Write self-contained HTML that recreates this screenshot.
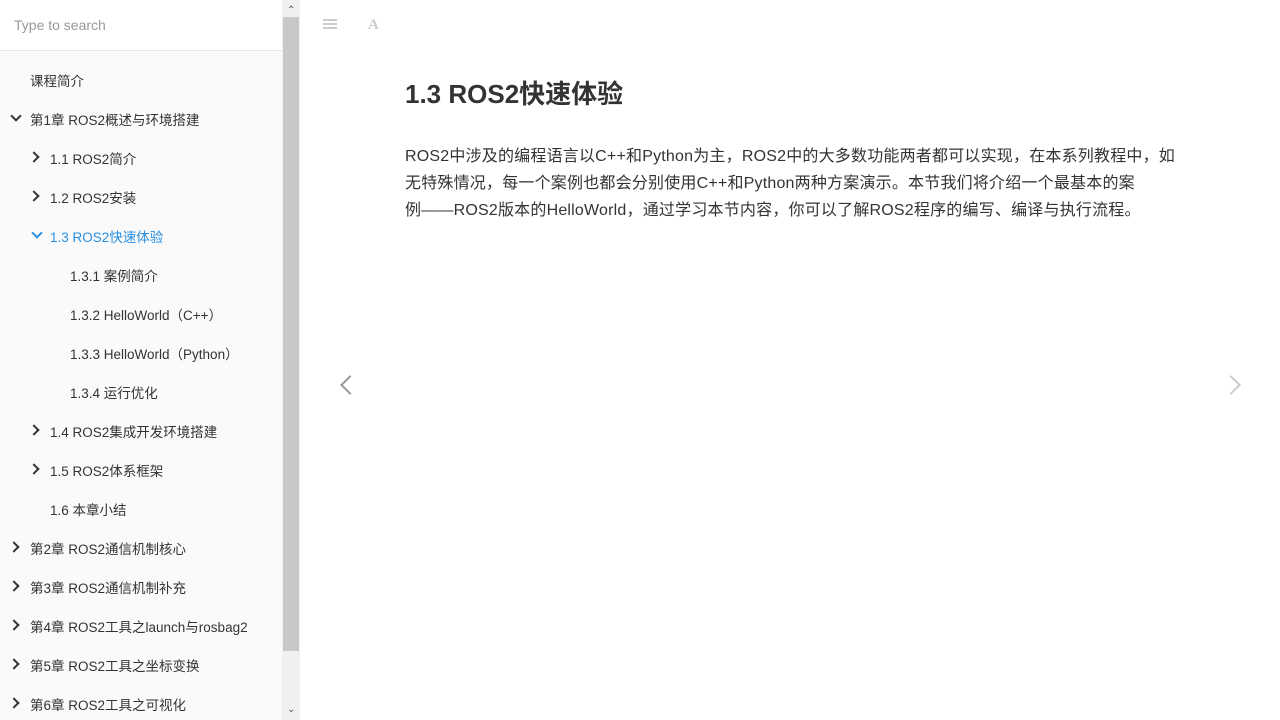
<!DOCTYPE html>
<html><head><meta charset="utf-8"><style>
*{margin:0;padding:0;box-sizing:border-box}
body{width:1280px;height:720px;overflow:hidden;background:#fff;font-family:"Liberation Sans","Noto Sans CJK SC",sans-serif;position:relative}
#side{position:absolute;left:0;top:0;width:282px;height:720px;background:#fafafa}
#search{height:51px;background:#fff;border-bottom:1px solid #e6e6e6;padding:17px 14px;font-size:14px;color:#999}
.it{position:absolute;font-size:13.5px;color:#333;white-space:nowrap}
.it.a{color:#2a8fe0}
.chev{position:absolute;width:8px;height:8px;border-right:2.6px solid #333;border-bottom:2.6px solid #333}
.r{transform:rotate(-45deg)}.d{transform:rotate(45deg)}
#sb{position:absolute;left:282px;top:0;width:18px;height:720px;background:#f0f0f0}
#thumb{position:absolute;left:283px;top:17px;width:16px;height:634px;background:#c8c8c8}
h1{position:absolute;left:405px;top:74px;font-size:26px;font-weight:bold;color:#333}
p{position:absolute;left:405px;top:143px;width:800px;font-size:16px;line-height:27px;color:#333;white-space:nowrap;letter-spacing:0.2px}
.nav{position:absolute;width:14px;height:14px;border-left:2.5px solid #999;border-bottom:2.5px solid #999}
</style></head><body>
<div id="side"><div id="search">Type to search</div></div>
<div class="it" style="left:30px;top:70px">课程简介</div>
<div class="chev d" style="left:12px;top:112px"></div><div class="it" style="left:30px;top:109px">第1章 ROS2概述与环境搭建</div>
<div class="chev r" style="left:30px;top:153px"></div><div class="it" style="left:50px;top:148px">1.1 ROS2简介</div>
<div class="chev r" style="left:30px;top:192px"></div><div class="it" style="left:50px;top:187px">1.2 ROS2安装</div>
<div class="chev d" style="left:33px;top:229px;border-color:#2a8fe0"></div><div class="it a" style="left:50px;top:226px">1.3 ROS2快速体验</div>
<div class="it" style="left:70px;top:265px">1.3.1 案例简介</div>
<div class="it" style="left:70px;top:304px">1.3.2 HelloWorld（C++）</div>
<div class="it" style="left:70px;top:343px">1.3.3 HelloWorld（Python）</div>
<div class="it" style="left:70px;top:382px">1.3.4 运行优化</div>
<div class="chev r" style="left:30px;top:426px"></div><div class="it" style="left:50px;top:421px">1.4 ROS2集成开发环境搭建</div>
<div class="chev r" style="left:30px;top:465px"></div><div class="it" style="left:50px;top:460px">1.5 ROS2体系框架</div>
<div class="it" style="left:50px;top:499px">1.6 本章小结</div>
<div class="chev r" style="left:10px;top:543px"></div><div class="it" style="left:30px;top:538px">第2章 ROS2通信机制核心</div>
<div class="chev r" style="left:10px;top:582px"></div><div class="it" style="left:30px;top:577px">第3章 ROS2通信机制补充</div>
<div class="chev r" style="left:10px;top:621px"></div><div class="it" style="left:30px;top:616px">第4章 ROS2工具之launch与rosbag2</div>
<div class="chev r" style="left:10px;top:660px"></div><div class="it" style="left:30px;top:655px">第5章 ROS2工具之坐标变换</div>
<div class="chev r" style="left:10px;top:699px"></div><div class="it" style="left:30px;top:694px">第6章 ROS2工具之可视化</div>
<div id="sb"></div><div id="thumb"></div>
<div style="position:absolute;left:287px;top:5px;font-size:10px;color:#555">&#8963;</div>
<div style="position:absolute;left:287px;top:704px;font-size:10px;color:#555">&#8964;</div>
<div style="position:absolute;left:323px;top:19px;width:14px;height:10px;border-top:2px solid #ccc;border-bottom:2px solid #ccc"></div>
<div style="position:absolute;left:323px;top:23px;width:14px;height:2px;background:#ccc"></div>
<div style="position:absolute;left:368px;top:17px;font-family:'Liberation Serif',serif;font-weight:bold;font-size:15px;color:#ccc">A</div>
<h1>1.3 ROS2快速体验</h1>
<p>ROS2中涉及的编程语言以C++和Python为主，ROS2中的大多数功能两者都可以实现，在本系列教程中，如<br>无特殊情况，每一个案例也都会分别使用C++和Python两种方案演示。本节我们将介绍一个最基本的案<br>例——ROS2版本的HelloWorld，通过学习本节内容，你可以了解ROS2程序的编写、编译与执行流程。</p>
<div class="nav" style="left:343px;top:378px;transform:rotate(45deg)"></div>
<div class="nav" style="left:1224px;top:378px;transform:rotate(-135deg);border-color:#ccc"></div>
</body></html>
